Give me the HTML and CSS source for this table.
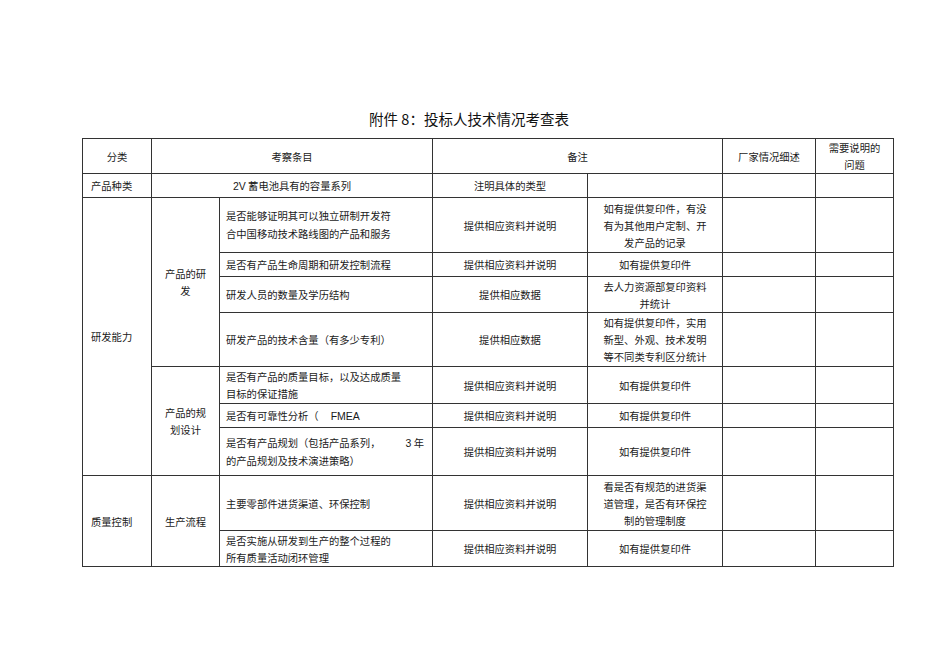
FILE: index.html
```html
<!DOCTYPE html>
<html lang="zh-CN">
<head>
<meta charset="utf-8">
<title>附件 8：投标人技术情况考查表</title>
<link rel="stylesheet" href="styles.css">
</head>
<body>
<div class="page">
  <h1 class="title">附件 8：投标人技术情况考查表</h1>
  <table class="sheet">
    <colgroup>
      <col class="c1"><col class="c2"><col class="c3"><col class="c4"><col class="c5"><col class="c6"><col class="c7">
    </colgroup>
    <tr class="h35">
      <td class="ctr">分类</td>
      <td class="ctr" colspan="2">考察条目</td>
      <td class="ctr" colspan="2">备注</td>
      <td class="ctr">厂家情况细述</td>
      <td class="ctr">需要说明的<br>问题</td>
    </tr>
    <tr class="h24">
      <td class="lft">产品种类</td>
      <td class="ctr" colspan="2"><span class="lat">2V</span> 蓄电池具有的容量系列</td>
      <td class="ctr">注明具体的类型</td>
      <td></td><td></td><td></td>
    </tr>
    <tr class="h55">
      <td class="lft" rowspan="7">研发能力</td>
      <td class="ctr" rowspan="4">产品的研<br>发</td>
      <td class="lft2 tall">是否能够证明其可以独立研制开发符<br>合中国移动技术路线图的产品和服务</td>
      <td class="ctr">提供相应资料并说明</td>
      <td class="ctr">如有提供复印件，有没<br>有为其他用户定制、开<br>发产品的记录</td>
      <td></td><td></td>
    </tr>
    <tr class="h24">
      <td class="lft2">是否有产品生命周期和研发控制流程</td>
      <td class="ctr">提供相应资料并说明</td>
      <td class="ctr">如有提供复印件</td>
      <td></td><td></td>
    </tr>
    <tr class="h36">
      <td class="lft2">研发人员的数量及学历结构</td>
      <td class="ctr">提供相应数据</td>
      <td class="ctr">去人力资源部复印资料<br>并统计</td>
      <td></td><td></td>
    </tr>
    <tr class="h54">
      <td class="lft2">研发产品的技术含量（有多少专利）</td>
      <td class="ctr">提供相应数据</td>
      <td class="ctr">如有提供复印件，实用<br>新型、外观、技术发明<br>等不同类专利区分统计</td>
      <td></td><td></td>
    </tr>
    <tr class="h37">
      <td class="ctr" rowspan="3">产品的规<br>划设计</td>
      <td class="lft2">是否有产品的质量目标，以及达成质量<br>目标的保证措施</td>
      <td class="ctr">提供相应资料并说明</td>
      <td class="ctr">如有提供复印件</td>
      <td></td><td></td>
    </tr>
    <tr class="h24">
      <td class="lft2">是否有可靠性分析（<span class="lat gap">FMEA</span></td>
      <td class="ctr">提供相应资料并说明</td>
      <td class="ctr">如有提供复印件</td>
      <td></td><td></td>
    </tr>
    <tr class="h48">
      <td class="lft2 tall"><span class="just"><span>是否有产品规划（包括产品系列，</span><span><span class="lat">3</span> 年</span></span>的产品规划及技术演进策略）</td>
      <td class="ctr">提供相应资料并说明</td>
      <td class="ctr">如有提供复印件</td>
      <td></td><td></td>
    </tr>
    <tr class="h55">
      <td class="lft" rowspan="2">质量控制</td>
      <td class="ctr" rowspan="2">生产流程</td>
      <td class="lft2">主要零部件进货渠道、环保控制</td>
      <td class="ctr">提供相应资料并说明</td>
      <td class="ctr">看是否有规范的进货渠<br>道管理，是否有环保控<br>制的管理制度</td>
      <td></td><td></td>
    </tr>
    <tr class="h36">
      <td class="lft2">是否实施从研发到生产的整个过程的<br>所有质量活动闭环管理</td>
      <td class="ctr">提供相应资料并说明</td>
      <td class="ctr">如有提供复印件</td>
      <td></td><td></td>
    </tr>
  </table>
</div>
</body>
</html>
```

FILE: styles.css
```css
html, body {
  margin: 0;
  padding: 0;
  background: #ffffff;
}

body {
  font-family: "Noto Sans CJK SC", "Liberation Sans", sans-serif;
  color: #1a1a1a;
}

.page {
  padding: 108px 0 0 82px;
}

.title {
  margin: 0 0 8px 0;
  width: 774px;
  text-align: center;
  font-size: 14.5px;
  font-weight: 400;
  line-height: 22px;
  color: #111;
}

.sheet {
  border-collapse: collapse;
  table-layout: fixed;
  width: 812px;
  font-size: 10.3px;
  line-height: 17px;
  border: 1px solid #555;
}

.sheet td {
  border: 1px solid #333;
  padding: 0;
  vertical-align: middle;
  white-space: nowrap;
}

.sheet td.tall {
  line-height: 18px;
}

.c1 { width: 69px; }
.c2 { width: 68px; }
.c3 { width: 213px; }
.c4 { width: 155px; }
.c5 { width: 135px; }
.c6 { width: 93px; }
.c7 { width: 78px; }

.h24 { height: 24px; }
.h35 { height: 35px; }
.h36 { height: 36px; }
.h37 { height: 37px; }
.h48 { height: 48px; }
.h54 { height: 54px; }
.h55 { height: 55px; }

.ctr { text-align: center; }
.lft { text-align: left; padding-left: 8px !important; }
.lft2 { text-align: left; padding-left: 6px !important; padding-right: 8px !important; }

.lat {
  font-family: "Liberation Sans", Arial, sans-serif;
  font-size: 10.5px;
}

.gap { margin-left: 12px; }

.just {
  display: flex;
  justify-content: space-between;
}
```
